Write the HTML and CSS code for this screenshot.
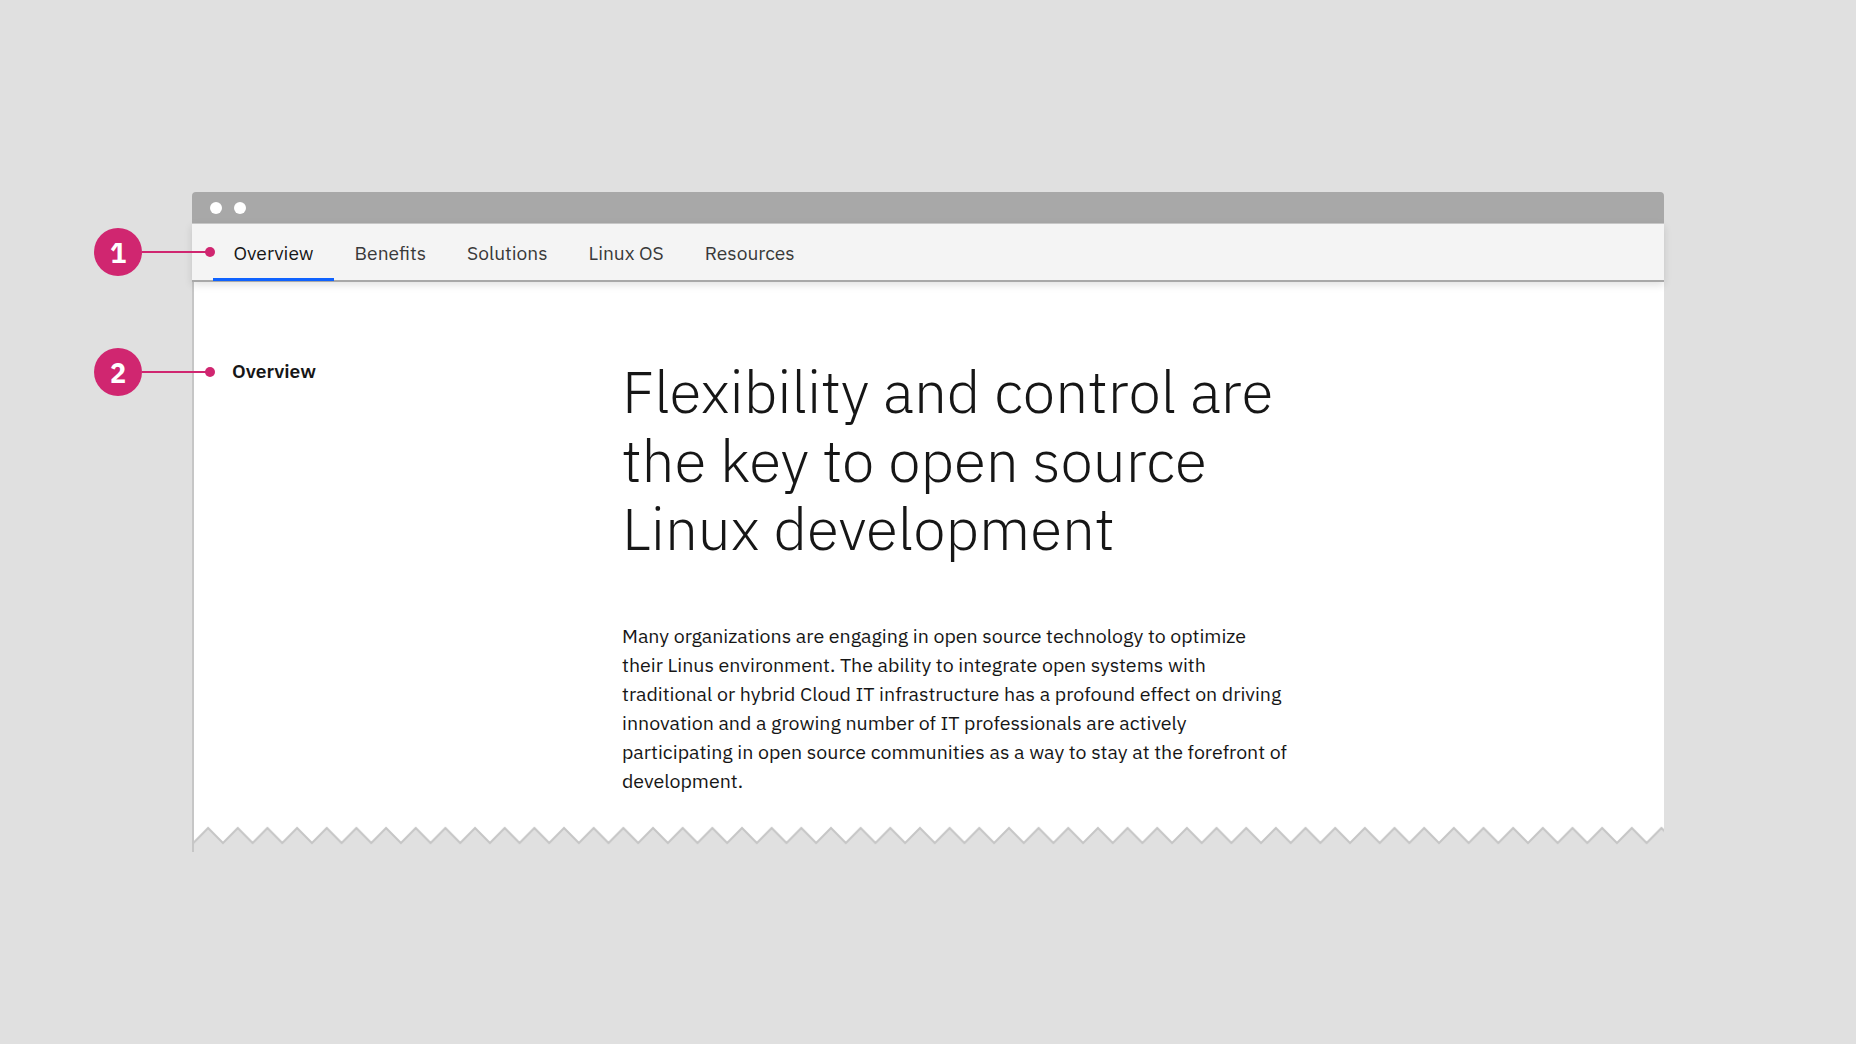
FILE: index.html
```html
<!DOCTYPE html>
<html lang="en">
<head>
<meta charset="utf-8">
<title>Tabs and side nav</title>
<link rel="stylesheet" href="styles.css">
</head>
<body>
<div class="window">
  <div class="titlebar">
    <span class="dot"></span>
    <span class="dot"></span>
  </div>
  <nav class="tabbar">
    <a class="tab active">Overview</a>
    <a class="tab">Benefits</a>
    <a class="tab">Solutions</a>
    <a class="tab">Linux OS</a>
    <a class="tab">Resources</a>
  </nav>
  <div class="page">
    <div class="row">
      <aside class="sidenav">Overview</aside>
      <main class="content">
        <h1 class="heading">Flexibility and control are<br>the key to open source<br>Linux development</h1>
        <p class="body">Many organizations are engaging in open source technology to optimize<br>their Linus environment. The ability to integrate open systems with<br>traditional or hybrid Cloud IT infrastructure has a profound effect on driving<br>innovation and a growing number of IT professionals are actively<br>participating in open source communities as a way to stay at the forefront of<br>development.</p>
      </main>
    </div>
    <svg class="zigzag" width="1470" height="26" viewBox="0 0 1470 26">
      <defs>
        <pattern id="zz" patternUnits="userSpaceOnUse" x="-0.7" y="0" width="29.66" height="26">
          <path d="M-14.83,2 L0,17 L14.83,2 L29.66,17 L44.49,2 L44.49,26 L-14.83,26 Z" fill="#e0e0e0"/>
          <path d="M-14.83,2 L0,17 L14.83,2 L29.66,17 L44.49,2" fill="none" stroke="#c6c6c6" stroke-width="2"/>
        </pattern>
      </defs>
      <rect x="0" y="0" width="1470" height="26" fill="url(#zz)"/>
    </svg>
  </div>
</div>

<div class="callout callout-1">
  <span class="badge">1</span>
  <span class="leader"></span>
  <span class="pin"></span>
</div>
<div class="callout callout-2">
  <span class="badge">2</span>
  <span class="leader"></span>
  <span class="pin"></span>
</div>
</body>
</html>
```

FILE: styles.css
```css
* { box-sizing: border-box; }

html, body {
  margin: 0;
  padding: 0;
}

body {
  width: 1856px;
  height: 1044px;
  background: #e0e0e0;
  font-family: "IBM Plex Sans", Roboto, "Liberation Sans", sans-serif;
  color: #161616;
  position: relative;
  overflow: hidden;
  padding-top: 192px;
  padding-left: 192px;
}

.window {
  width: 1472px;
  display: flex;
  flex-direction: column;
}

.titlebar {
  height: 31px;
  background: #a8a8a8;
  border-radius: 4px 4px 0 0;
  display: flex;
  align-items: center;
  gap: 12px;
  padding-left: 18px;
  padding-top: 1px;
}

.dot {
  width: 12px;
  height: 12px;
  border-radius: 50%;
  background: #ffffff;
}

.tabbar {
  height: 59px;
  background: #f4f4f4;
  border-top: 1px solid #c6c6c6;
  border-bottom: 2px solid #a8a8a8;
  display: flex;
  align-items: stretch;
  padding-left: 21px;
  box-shadow: 0 3px 8px rgba(0, 0, 0, 0.12);
  position: relative;
  z-index: 1;
}

.tab {
  position: relative;
  display: flex;
  align-items: center;
  padding: 0 20.5px;
  font-size: 19.2px;
  color: #393939;
}

.tab.active {
  color: #161616;
}

.tab.active::after {
  content: "";
  position: absolute;
  left: 0;
  right: 0;
  bottom: -1px;
  height: 3px;
  background: #0f62fe;
}

.page {
  height: 570px;
  background: #ffffff;
  border-left: 2px solid #c6c6c6;
  display: flex;
  flex-direction: column;
}

.row {
  flex: 1;
  display: grid;
  grid-template-columns: 428px 1fr;
  padding-top: 78px;
}

.sidenav {
  padding-left: 38px;
  font-size: 19.3px;
  font-weight: 600;
  line-height: 24px;
  color: #161616;
  margin-top: -1px;
}

.content {
  display: flex;
  flex-direction: column;
}

.heading {
  margin: -3px 0 0 0;
  font-size: 58.5px;
  font-weight: 300;
  line-height: 68.5px;
  color: #161616;
}

.body {
  margin: 58px 0 0 0;
  font-size: 19.6px;
  line-height: 29px;
  color: #161616;
}

.zigzag {
  display: block;
  flex: none;
}

/* annotation callouts (overlay) */
.callout {
  position: absolute;
  left: 94px;
  width: 122px;
  height: 48px;
  display: flex;
  align-items: center;
  z-index: 5;
}

.callout-1 { top: 228px; }
.callout-2 { top: 348px; }

.badge {
  width: 48px;
  height: 48px;
  border-radius: 50%;
  background: #d02670;
  color: #ffffff;
  font-family: "IBM Plex Sans", Roboto, "Liberation Sans", sans-serif;
  font-weight: 700;
  font-size: 27px;
  display: flex;
  align-items: center;
  justify-content: center;
  flex: none;
}

.leader {
  width: 66px;
  height: 2px;
  background: #d02670;
  flex: none;
}

.pin {
  width: 10px;
  height: 10px;
  border-radius: 50%;
  background: #d02670;
  margin-left: -3px;
  flex: none;
}
```
